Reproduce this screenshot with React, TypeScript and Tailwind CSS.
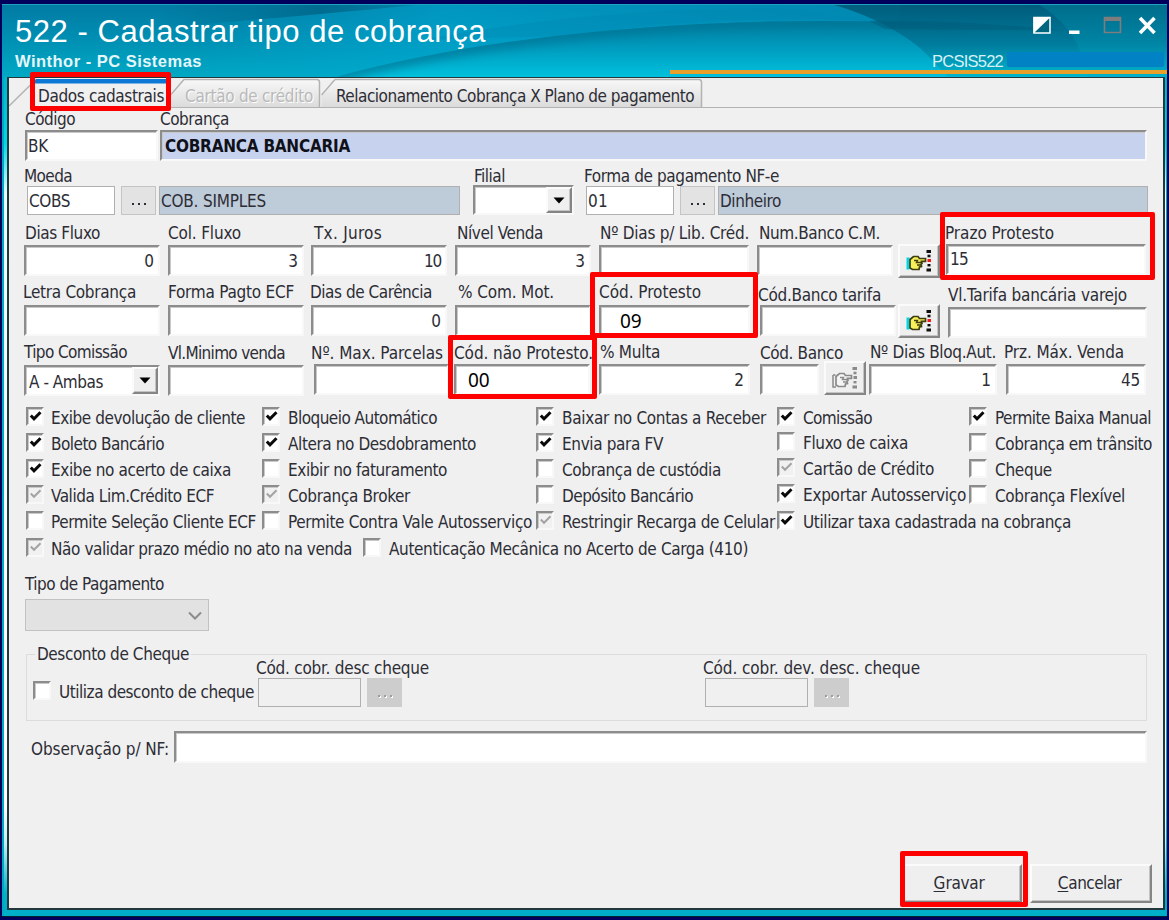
import { useLayoutEffect, useRef, useState, type ReactNode } from "react";

/** Single line of text, tracked so that it fills the given width. */
function Fit({ w, children, className = "" }: { w: number; children: string; className?: string }) {
  const ref = useRef<HTMLSpanElement>(null);
  const [spacing, setSpacing] = useState(0);
  useLayoutEffect(() => {
    const el = ref.current;
    if (!el) return;
    el.style.letterSpacing = "0px";
    const natural = el.getBoundingClientRect().width;
    const next = (w - natural) / Math.max(1, children.length);
    el.style.letterSpacing = `${next}px`;
    setSpacing(next);
  }, [w, children]);
  return (
    <span ref={ref} className={`inline-block whitespace-nowrap ${className}`} style={{ letterSpacing: `${spacing}px` }}>
      {children}
    </span>
  );
}

const sunken =
  "border-2 border-t-[#8c8c8c] border-l-[#8c8c8c] border-r-[#f8f8f8] border-b-[#f8f8f8] shadow-[inset_1px_1px_0_#c9c9c9]";
const raised =
  "border-2 border-t-[#fbfbfb] border-l-[#fbfbfb] border-r-[#858585] border-b-[#858585] bg-[#efefef] shadow-[inset_-1px_-1px_0_#c4c4c4]";

type FieldProps = {
  label?: string;
  lw?: number;
  className?: string;
  labelClass?: string;
  children?: ReactNode;
};

function Field({ label, lw = 0, className = "", labelClass = "", children }: FieldProps) {
  return (
    <div className={`flex shrink-0 flex-col ${className}`}>
      <div className={`flex shrink-0 leading-5 ${labelClass}`}>{label && <Fit w={lw}>{label}</Fit>}</div>
      {children}
    </div>
  );
}

function Box({ value = "", children, className = "" }: { value?: string; children?: ReactNode; className?: string }) {
  return (
    <div className={`flex h-[31px] shrink-0 items-center justify-end bg-white pr-[4px] leading-5 ${sunken} ${className}`}>
      {children ?? value}
    </div>
  );
}

function Flat({ children, className = "" }: { children?: ReactNode; className?: string }) {
  return (
    <div className={`flex h-[29px] shrink-0 items-center border-[1.5px] border-[#b0b0b0] leading-5 ${className}`}>{children}</div>
  );
}

function Dots({ className = "" }: { className?: string }) {
  return (
    <div className={`flex h-[29px] w-[35px] shrink-0 items-center justify-center gap-[4px] pt-[7px] ${className}`}>
      <i className="size-[2px] bg-current" />
      <i className="size-[2px] bg-current" />
      <i className="size-[2px] bg-current" />
    </div>
  );
}

function DropButton() {
  return (
    <div className={`flex h-full w-[26px] items-center justify-center ${raised}`}>
      <svg width="12" height="7" viewBox="0 0 12 7">
        <path d="M0.5 0.5h11L6 6.5z" fill="#000" />
      </svg>
    </div>
  );
}

function HandButton({ disabled = false, className = "" }: { disabled?: boolean; className?: string }) {
  const line = disabled ? "#8a8a8a" : "#3d3d10";
  return (
    <div className={`h-[34px] w-[42px] shrink-0 pt-[3px] pl-[6px] ${raised} ${className}`}>
      <svg width="27" height="24" viewBox="0 0 27 24">
        {!disabled && <path d="M0.5 8.500h3v12h-3z" fill="#00d5e5" />}
        {disabled && <path d="M1 9h2.500M1 9v12h3" fill="none" stroke={line} strokeWidth="1.500" />}
        <path
          d="M4 10.500L7.500 7.500H12L13.500 9.500H19.500V12.300H15.500L16 14.500L15 15L15.500 17.500L13.500 18L13 20.500H6.500L4 19z"
          fill={disabled ? "#f4f4f4" : "#f7f05a"}
          stroke={line}
          strokeWidth="1.700"
        />
        <path d="M8 11.500h3.500l-1 2h4.500M11 16h4" fill="none" stroke={line} strokeWidth="1.400" />
        <g fill={disabled ? "#8a8a8a" : "#101010"}>
          <rect x="20.500" y="1" width="4.500" height="3" />
          <rect x="21.500" y="5.700" width="3" height="2.600" />
          <rect x="21.500" y="15" width="3" height="2.400" />
          <rect x="20.500" y="19.500" width="4.500" height="3" />
        </g>
        <rect x="21.500" y="10" width="3.500" height="3" fill={disabled ? "#8a8a8a" : "#f01818"} />
      </svg>
    </div>
  );
}

type CheckState = "on" | "off" | "dim";

function Check({ state, label, w, className = "", gap = "gap-[7px]" }: { state: CheckState; label: string; w: number; className?: string; gap?: string }) {
  return (
    <div className={`flex h-[26px] shrink-0 ${gap} ${className}`}>
      <span
        className={`mt-[3px] flex h-[19px] w-[18px] shrink-0 pt-px pl-px ${sunken} ${
          state === "dim" ? "bg-[#f1f1f1]" : "bg-white"
        }`}
      >
        {state !== "off" && (
          <svg width="13" height="13" viewBox="0 0 13 13">
            <path
              d="M1.800 5.500L5 8.800L11.500 2.200"
              fill="none"
              stroke={state === "on" ? "#0a0a0a" : "#a3a3a3"}
              strokeWidth={state === "on" ? 3 : 2}
            />
          </svg>
        )}
      </span>
      <span className="mt-[4px] leading-5">
        <Fit w={w}>{label}</Fit>
      </span>
    </div>
  );
}

function HeaderArt() {
  return (
    <svg className="absolute inset-0" width="1165" height="73" viewBox="2 4 1165 73" preserveAspectRatio="none">
      <defs>
        <linearGradient id="base" x1="0" y1="0" x2="0" y2="1">
          <stop offset="0" stopColor="#027aa3" />
          <stop offset="0.500" stopColor="#0090b4" />
          <stop offset="1" stopColor="#00a9c5" />
        </linearGradient>
        <linearGradient id="mid" x1="0" y1="0" x2="1" y2="0">
          <stop offset="0" stopColor="#00a8d2" stopOpacity="0" />
          <stop offset="0.350" stopColor="#00a8d2" stopOpacity="0.600" />
          <stop offset="1" stopColor="#0092bc" stopOpacity="0.500" />
        </linearGradient>
        <linearGradient id="wedge" x1="0" y1="0" x2="1" y2="0">
          <stop offset="0" stopColor="#00688c" stopOpacity="0" />
          <stop offset="0.600" stopColor="#00688c" stopOpacity="0.900" />
          <stop offset="1" stopColor="#00688c" stopOpacity="0.300" />
        </linearGradient>
        <linearGradient id="low" x1="0" y1="0" x2="0" y2="1">
          <stop offset="0" stopColor="#007a9c" />
          <stop offset="0.450" stopColor="#0098bb" />
          <stop offset="1" stopColor="#00c2de" />
        </linearGradient>
        <linearGradient id="dark" x1="0" y1="0" x2="0" y2="1">
          <stop offset="0" stopColor="#005370" />
          <stop offset="0.550" stopColor="#007596" />
          <stop offset="1" stopColor="#00b3cc" />
        </linearGradient>
        <clipPath id="lowClip">
          <path d="M335 77C420 54 520 37 640 28C740 20 850 19 960 24L1167 36V77z" />
        </clipPath>
        <filter id="soft" x="-5%" y="-50%" width="110%" height="200%">
          <feGaussianBlur stdDeviation="5" />
        </filter>
      </defs>
      <rect x="2" y="4" width="1165" height="73" fill="url(#base)" />
      <rect x="200" y="4" width="700" height="73" fill="url(#mid)" />
      <path d="M160 28C270 18 350 12 425 4H160z" fill="url(#wedge)" />
      <g clipPath="url(#lowClip)">
        <rect x="335" y="18" width="832" height="60" fill="url(#low)" />
        <path d="M335 77C420 54 520 37 640 28C740 20 850 19 960 24" fill="none" stroke="#007495" strokeWidth="12" opacity="0.750" filter="url(#soft)" />
      </g>
      <path d="M420 40C560 14 680 7 790 9L866 20C780 17 680 20 560 36z" fill="#0086b0" opacity="0.300" />
      <path d="M831 4C880 18 915 40 932 60L948 77H1167V4z" fill="url(#dark)" opacity="0.800" />
      <path d="M869 21C930 20 1000 24 1060 30C1000 30 930 30 885 29z" fill="#005a78" opacity="0.450" />
      <path d="M1038 4C1062 18 1076 38 1082 56L1088 77H1167V4z" fill="#00a3c0" opacity="0.250" />
      <path d="M2 4.500H1167" stroke="#1ba3c0" strokeWidth="1" />
    </svg>
  );
}

function Tab({ w, tw, label, dim = false }: { w: number; tw: number; label: string; dim?: boolean }) {
  return (
    <div className="relative h-[29px] shrink-0">
      <svg className="absolute inset-0" width={w} height="29">
        <defs>
          <linearGradient id="tab" x1="0" y1="0" x2="0" y2="1">
            <stop offset="0" stopColor="#f8f8f8" />
            <stop offset="1" stopColor="#dadada" />
          </linearGradient>
        </defs>
        <path d={`M0.500 30V17L14 1.500H${w - 4}Q${w - 1.5} 1.500 ${w - 1.5} 4.500V30z`} fill="url(#tab)" />
        <path d={`M0.500 17L14 1.500H${w - 4}Q${w - 1.5} 1.500 ${w - 1.5} 4.500V30`} fill="none" stroke="#b2b2b2" strokeWidth="1.500" />
      </svg>
      <div className={`relative pt-[8px] pl-[15px] leading-5 ${dim ? "text-[#b9b9b9] [text-shadow:1px_1px_0_#fff]" : ""}`}>
        <Fit w={tw}>{label}</Fit>
      </div>
    </div>
  );
}

function Header() {
  return (
    <header className="relative h-[72px] w-full text-white">
      <HeaderArt />
      <div className="relative flex h-full justify-between">
        <div className="flex flex-col pl-[13px] font-['Liberation_Sans',sans-serif]">
          <h1 className="mt-[11px] h-[34px] text-[31px] leading-[34px]">
            <Fit w={471}>522 - Cadastrar tipo de cobrança</Fit>
          </h1>
          <p className="mt-[2px] text-[16.5px] leading-5 font-bold text-[#e5f6fa]">
            <Fit w={187}>Winthor - PC Sistemas</Fit>
          </p>
        </div>
        <div className="flex w-[497px] flex-col">
          <div className="mt-[10px] flex h-[24px] items-start self-end pr-[10px]">
            <svg width="124" height="22" viewBox="0 0 124 22">
              <path d="M1 3.500h16v15.500h-16z" fill="#00667f" stroke="#fff" strokeWidth="1.500" />
              <path d="M0.500 3h17L0.500 19.500z" fill="#fff" />
              <rect x="36" y="16.500" width="10.500" height="3.500" fill="#fff" />
              <path d="M71.500 3.500h16v15h-16z" fill="none" stroke="#7d7d7d" strokeWidth="1.600" />
              <rect x="71" y="3" width="17" height="4" fill="#7d7d7d" />
              <path d="M107 4L121.500 19M121.500 4L107 19" stroke="#fff" strokeWidth="3.600" />
            </svg>
          </div>
          <div className="mt-[13px] flex h-[19px] justify-end gap-[4px] pr-[3px] font-['Liberation_Sans',sans-serif] text-[16.5px] leading-[21px] text-[#d8f1f6]">
            <Fit w={71}>PCSIS522</Fit>
            <div className="mt-px h-[15px] w-[157px] rounded-[2px] bg-[#0082c4]" />
          </div>
          <div className="h-[4px] w-full bg-[#e9a02a]" />
        </div>
      </div>
    </header>
  );
}

export default function App() {
  return (
    <div className="relative h-[920px] w-[1169px] overflow-hidden bg-[#00005c] pt-[4px] pl-[2px] font-['DejaVu_Sans_Condensed','DejaVu_Sans',sans-serif] text-[17px] text-[#2d2d35] [font-stretch:condensed]">
      <div className="flex h-[913px] w-[1165px] flex-col border-b border-[#00252f] bg-[linear-gradient(to_bottom,#00a9c5_0,#00b6d0_80px,#00d8e8_140px,#e8ffff_190px,#ffffff_800px,#bff0f4_840px,#00b1c9_890px,#00aec8_100%)] shadow-[inset_2px_0_0_#00a9c2,inset_-1px_0_0_#00a9c2]">
        <Header />
        <main className="ml-[5px] flex h-[834px] w-[1158px] flex-col border-2 border-[#22383c] bg-[#f0f0f0]">
          <nav className="flex h-[30px] shrink-0 border-b-[1.500px] border-[#b2b2b2]">
            <div className="relative h-[31px] w-[161px] shrink-0 bg-[#f0f0f0]">
              <svg className="absolute inset-0" width="161" height="31">
                <path d="M0 28L27 1.500" fill="none" stroke="#b2b2b2" strokeWidth="1.500" />
                <path d="M24 5.500L27 1H158V5.500z" fill="#0a78d4" />
                <path d="M161 19V28" stroke="#b2b2b2" />
              </svg>
              <div className="relative pt-[8px] pl-[29px] leading-5">
                <Fit w={126}>Dados cadastrais</Fit>
              </div>
            </div>
            <Tab w={151} tw={128} label="Cartão de crédito" dim />
            <div className="ml-[8px]">
              <Tab w={382} tw={358} label="Relacionamento Cobrança X Plano de pagamento" />
            </div>
          </nav>

          {/* code and description */}
          <div className="flex h-[58px] shrink-0 pt-px pl-[16px]">
            <Field label="Código" lw={50} className="w-[134px]" labelClass="h-[21px]">
              <Box className="w-[133px] justify-start! pl-px">
                <Fit w={20}>BK</Fit>
              </Box>
            </Field>
            <Field label="Cobrança" lw={69} className="ml-px w-[987px]" labelClass="h-[21px]">
              <Box className="justify-start! bg-[#c6d2ee]! pl-[3px] font-bold text-[#101018] [font-stretch:condensed]">
                <Fit w={185}>COBRANCA BANCARIA</Fit>
              </Box>
            </Field>
          </div>

          {/* currency, branch, payment form */}
          <div className="flex h-[57px] shrink-0 pl-[15px]">
            <Field label="Moeda" lw={48} className="w-[437px]" labelClass="h-[20px]">
              <div className="flex pl-[3px]">
                <Flat className="w-[88px] bg-white pl-px">
                  <Fit w={41}>COBS</Fit>
                </Flat>
                <Dots className="ml-[6px] border border-[#c4c4c4] bg-[#e3e3e3]" />
                <Flat className="ml-[3px] w-[301px] bg-[#becbd9] pl-px">
                  <Fit w={105}>COB. SIMPLES</Fit>
                </Flat>
              </div>
            </Field>
            <Field label="Filial" lw={31} className="ml-[12px] w-[101px]" labelClass="h-[19px] pl-px">
              <div className={`flex h-[30px] justify-end bg-white ${sunken}`}>
                <DropButton />
              </div>
            </Field>
            <Field label="Forma de pagamento NF-e" lw={195} className="ml-[9px]" labelClass="h-[20px] pl-px">
              <div className="flex pl-[3px]">
                <Flat className="w-[88px] bg-white pl-px">
                  <Fit w={20}>01</Fit>
                </Flat>
                <Dots className="ml-[6px] border border-[#c4c4c4] bg-[#e3e3e3]" />
                <Flat className="ml-[3px] w-[430px] bg-[#becbd9] pl-px">
                  <Fit w={61}>Dinheiro</Fit>
                </Flat>
              </div>
            </Field>
          </div>

          {/* cash flow row */}
          <div className="flex h-[59px] shrink-0 pl-[15px]">
            <Field label="Dias Fluxo" lw={75} className="w-[136px]" labelClass="h-[22px] pl-px">
              <Box value="0" />
            </Field>
            <Field label="Col. Fluxo" lw={73} className="ml-[8px] w-[136px]" labelClass="h-[22px]">
              <Box value="3" />
            </Field>
            <Field label="Tx. Juros" lw={68} className="ml-[7px] w-[136px]" labelClass="h-[22px] pl-[3px]">
              <Box>
                <Fit w={17}>10</Fit>
              </Box>
            </Field>
            <Field label="Nível Venda" lw={86} className="ml-[8px] w-[136px]" labelClass="h-[22px] pl-[2px]">
              <Box value="3" />
            </Field>
            <Field label="Nº Dias p/ Lib. Créd." lw={149} className="ml-[8px] w-[150px]" labelClass="h-[22px] pl-px">
              <Box />
            </Field>
            <Field label="Num.Banco C.M." lw={121} className="ml-[8px] w-[136px]" labelClass="h-[22px] pl-[2px]">
              <Box />
            </Field>
            <HandButton className="mt-[21px] ml-[5px]" />
            <Field label="Prazo Protesto" lw={109} className="ml-[4px] w-[202px]" labelClass="h-[21px] pl-px">
              <Box className="ml-[2px] justify-start! pb-px pl-[2px]">
                <Fit w={18}>15</Fit>
              </Box>
            </Field>
          </div>

          {/* charge letter row */}
          <div className="flex h-[60px] shrink-0 pl-[14px]">
            <Field label="Letra Cobrança" lw={113} className="w-[137px]" labelClass="h-[23px]">
              <Box className="ml-px" />
            </Field>
            <Field label="Forma Pagto ECF" lw={126} className="ml-[8px] w-[136px]" labelClass="h-[23px]">
              <Box />
            </Field>
            <Field label="Dias de Carência" lw={122} className="ml-[6px] w-[137px]" labelClass="h-[23px]">
              <Box value="0" className="ml-px" />
            </Field>
            <Field label="% Com. Mot." lw={96} className="ml-[8px] w-[136px]" labelClass="h-[23px] pl-[3px]">
              <Box />
            </Field>
            <Field label="Cód. Protesto" lw={102} className="ml-[7px] w-[152px]" labelClass="h-[23px] pl-px">
              <Box value="09" className="ml-px justify-start! pl-[19px] font-['Noto_Sans',sans-serif] text-[19px] text-black" />
            </Field>
            <Field label="Cód.Banco tarifa" lw={123} className="ml-[8px] w-[138px]" labelClass="h-[23px] pt-[3px]">
              <Box className="ml-[2px]" />
            </Field>
            <HandButton className="mt-[22px] ml-[2px]" />
            <Field label="Vl.Tarifa bancária varejo" lw={179} className="ml-[8px] w-[199px]" labelClass="h-[25px] pt-[3px]">
              <Box />
            </Field>
          </div>

          {/* commission row */}
          <div className="flex h-[62px] shrink-0 pl-[15px]">
            <Field label="Tipo Comissão" lw={103} className="w-[136px]" labelClass="h-[23px]">
              <div className={`flex h-[31px] bg-white ${sunken}`}>
                <span className="flex-1 pt-[5px] pl-[3px] leading-5">
                  <Fit w={74}>A - Ambas</Fit>
                </span>
                <DropButton />
              </div>
            </Field>
            <Field label="Vl.Minimo venda" lw={117} className="ml-[8px] w-[136px]" labelClass="h-[23px] pt-px">
              <Box />
            </Field>
            <Field label="Nº. Max. Parcelas" lw={132} className="ml-[7px] w-[138px]" labelClass="h-[22px] pt-px">
              <Box className="ml-[3px]" />
            </Field>
            <Field label="Cód. não Protesto." lw={139} className="ml-[5px] w-[136px]" labelClass="h-[22px] pt-px">
              <Box value="00" className="justify-start! pl-[12px] font-['Noto_Sans',sans-serif] text-[19px] text-black" />
            </Field>
            <Field label="% Multa" lw={60} className="ml-[9px] w-[151px]" labelClass="h-[22px] pl-px">
              <Box value="2" />
            </Field>
            <Field label="Cód. Banco" lw={83} className="ml-[10px] w-[59px]" labelClass="h-[22px] pt-px">
              <Box />
            </Field>
            <HandButton disabled className="mt-[19px] ml-[5px]" />
            <Field label="Nº Dias Bloq.Aut." lw={126} className="ml-[3px] w-[128px]" labelClass="h-[22px] pl-px">
              <Box value="1" />
            </Field>
            <Field label="Prz. Máx. Venda" lw={120} className="ml-[7px] w-[142px]" labelClass="h-[22px]">
              <Box className="ml-[2px]">
                <Fit w={19}>45</Fit>
              </Box>
            </Field>
          </div>

          {/* flags */}
          <div className="grid h-[130px] shrink-0 grid-cols-[236px_274px_241px_192px_auto] pl-[17px]">
            <div>
              <Check state="on" label="Exibe devolução de cliente" w={194} />
              <Check state="on" label="Boleto Bancário" w={113} />
              <Check state="on" label="Exibe no acerto de caixa" w={180} />
              <Check state="dim" label="Valida Lim.Crédito ECF" w={163} />
              <Check state="off" label="Permite Seleção Cliente ECF" w={205} />
            </div>
            <div>
              <Check state="on" label="Bloqueio Automático" w={149} gap="gap-[8px]" />
              <Check state="on" label="Altera no Desdobramento" w={188} gap="gap-[8px]" />
              <Check state="off" label="Exibir no faturamento" w={159} gap="gap-[8px]" />
              <Check state="dim" label="Cobrança Broker" w={122} gap="gap-[8px]" />
              <Check state="off" label="Permite Contra Vale Autosserviço" w={244} gap="gap-[8px]" />
            </div>
            <div>
              <Check state="on" label="Baixar no Contas a Receber" w={204} gap="gap-[8px]" />
              <Check state="on" label="Envia para FV" w={101} gap="gap-[8px]" />
              <Check state="off" label="Cobrança de custódia" w={159} gap="gap-[8px]" />
              <Check state="off" label="Depósito Bancário" w={131} gap="gap-[8px]" />
              <Check state="dim" label="Restringir Recarga de Celular" w={213} gap="gap-[8px]" />
            </div>
            <div>
              <Check state="on" label="Comissão" w={69} gap="gap-[8px]" className="h-[25px]!" />
              <Check state="off" label="Fluxo de caixa" w={105} gap="gap-[8px]" />
              <Check state="dim" label="Cartão de Crédito" w={131} gap="gap-[8px]" />
              <Check state="on" label="Exportar Autosserviço" w={163} gap="gap-[8px]" className="h-[27px]!" />
              <Check state="on" label="Utilizar taxa cadastrada na cobrança" w={268} gap="gap-[8px]" />
            </div>
            <div>
              <Check state="on" label="Permite Baixa Manual" w={156} gap="gap-[8px]" />
              <Check state="off" label="Cobrança em trânsito" w={157} gap="gap-[8px]" />
              <Check state="off" label="Cheque" w={57} gap="gap-[8px]" />
              <Check state="off" label="Cobrança Flexível" w={130} gap="gap-[8px]" />
            </div>
          </div>
          <div className="flex h-[40px] shrink-0 pt-px pl-[17px]">
            <Check state="dim" label="Não validar prazo médio no ato na venda" w={301} className="w-[337px]" />
            <Check state="off" label="Autenticação Mecânica no Acerto de Carga (410)" w={359} gap="gap-[8px]" />
          </div>

          {/* payment type */}
          <div className="flex h-[71px] shrink-0 flex-col pl-[16px]">
            <div className="h-[25px] shrink-0 leading-5">
              <Fit w={139}>Tipo de Pagamento</Fit>
            </div>
            <div className="flex h-[32px] w-[184px] shrink-0 items-center justify-end border-[1.500px] border-[#c2c2c2] bg-[#e2e2e2] pr-[6px]">
              <svg width="14" height="9" viewBox="0 0 14 9">
                <path d="M1 1.500L7 7.500L13 1.500" fill="none" stroke="#8b8b8b" strokeWidth="2" />
              </svg>
            </div>
          </div>

          {/* cheque discount */}
          <fieldset className="ml-[17px] flex h-[76px] w-[1121px] shrink-0 border border-[#dcdcdc]">
            <legend className="ml-[8px] h-[18px] px-[2px] leading-[18px]">
              <Fit w={152}>Desconto de Cheque</Fit>
            </legend>
            <div className="-mt-[4px] flex">
              <Check state="off" label="Utiliza desconto de cheque" w={195} gap="gap-[8px]" className="mt-[19px] ml-[6px]" />
              <Field label="Cód. cobr. desc cheque" lw={173} className="ml-[2px] w-[447px]" labelClass="-mt-px h-[20px]">
                <div className="flex pl-[2px]">
                  <Flat className="w-[103px]" />
                  <Dots className="ml-[6px] bg-[#cdcdcd] text-[#9d9d9d] [&>i]:shadow-[1px_1px_0_#fff]" />
                </div>
              </Field>
              <Field label="Cód. cobr. dev. desc. cheque" lw={217} labelClass="-mt-px h-[20px]">
                <div className="flex pl-[2px]">
                  <Flat className="w-[103px]" />
                  <Dots className="ml-[6px] bg-[#cdcdcd] text-[#9d9d9d] [&>i]:shadow-[1px_1px_0_#fff]" />
                </div>
              </Field>
            </div>
          </fieldset>

          <div className="mt-[10px] flex h-[32px] shrink-0 pl-[22px]">
            <span className="w-[143px] pt-[8px] leading-5">
              <Fit w={138}>Observação p/ NF:</Fit>
            </span>
            <Box className="h-[32px]! w-[973px]" />
          </div>

          <div className="mt-auto mr-[11px] mb-[5px] flex justify-end gap-[8px]">
            <button className={`h-[39px] w-[122px] pr-[4px] ${raised}`}>
              <span className="underline underline-offset-2">G</span>
              <Fit w={39}>ravar</Fit>
            </button>
            <button className={`h-[39px] w-[122px] pr-[3px] ${raised}`}>
              <span className="underline underline-offset-2">C</span>
              <Fit w={53}>ancelar</Fit>
            </button>
          </div>
        </main>
      </div>

      {/* highlights over the form */}
      <div className="absolute top-[72px] left-[30px] h-[39px] w-[141px] rounded-[2px] border-[5px] border-[#fe0000]" />
      <div className="absolute top-[212px] left-[940px] h-[68px] w-[215px] rounded-[2px] border-[5px] border-[#fe0000]" />
      <div className="absolute top-[272px] left-[590px] h-[66px] w-[168px] rounded-[2px] border-[5px] border-[#fe0000]" />
      <div className="absolute top-[335px] left-[448px] h-[64px] w-[149px] rounded-[2px] border-[5px] border-[#fe0000]" />
      <div className="absolute top-[851px] left-[900px] h-[56px] w-[128px] rounded-[2px] border-[5px] border-[#fe0000]" />
    </div>
  );
}
